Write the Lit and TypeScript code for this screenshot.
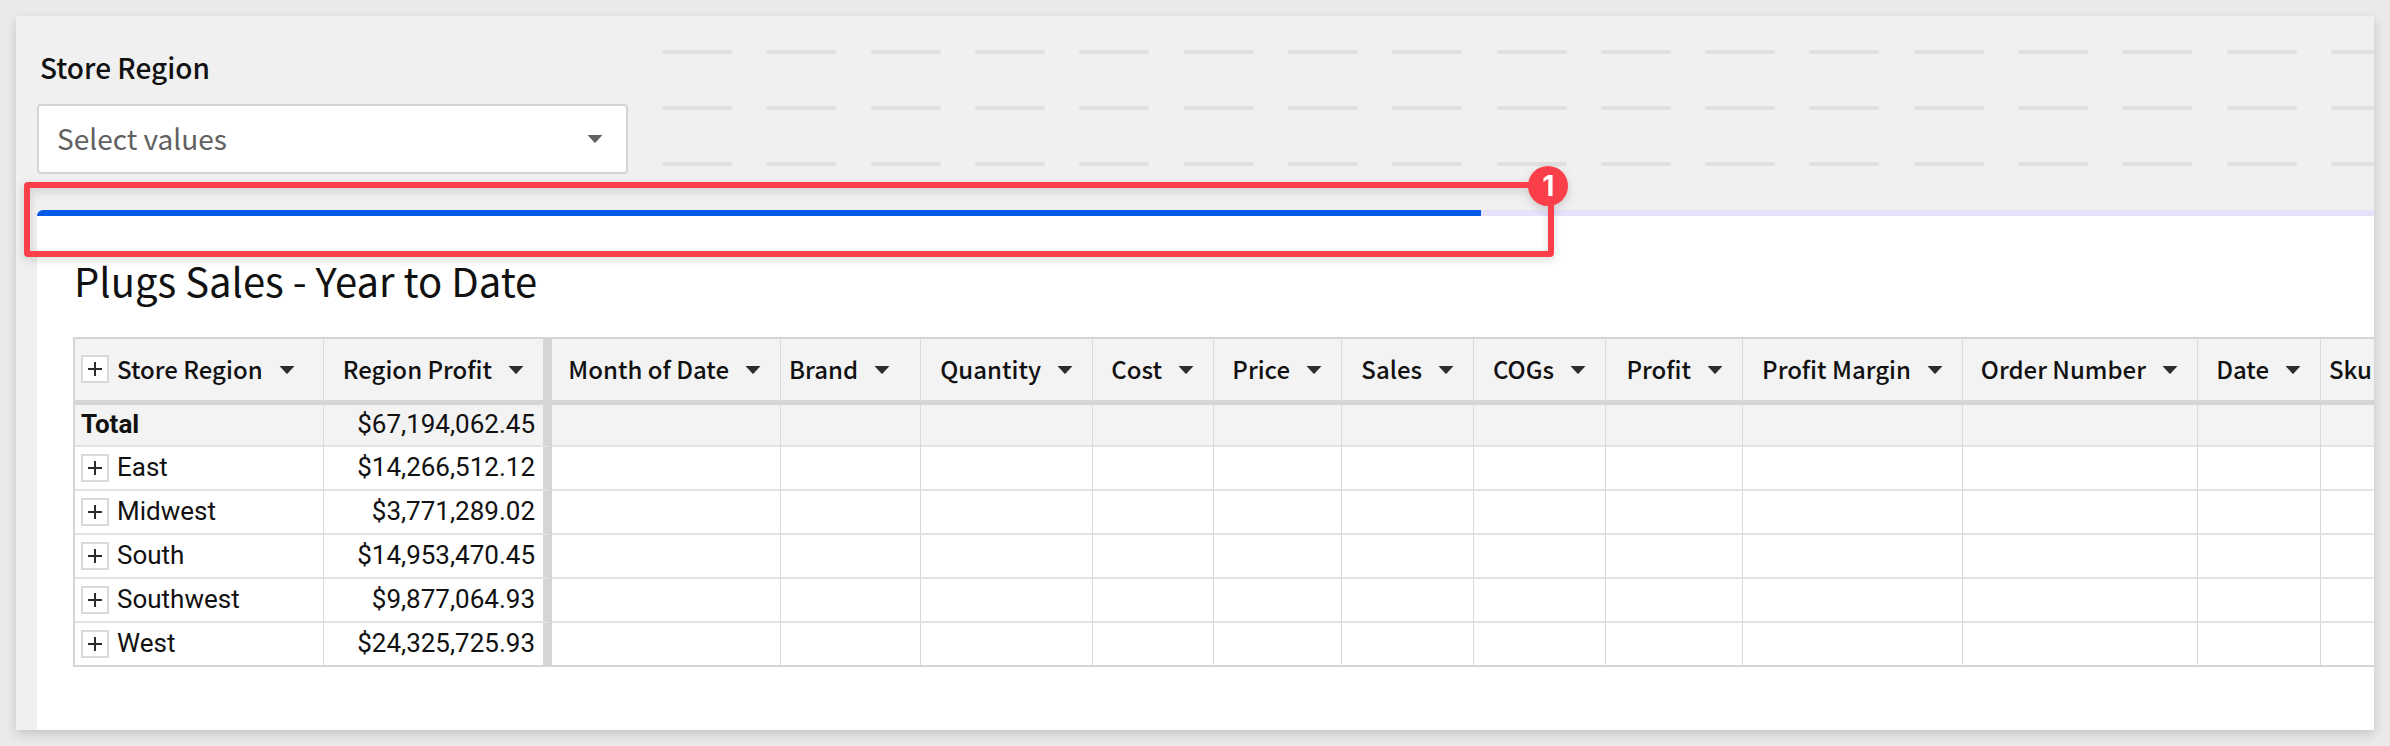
import { LitElement, html, css, nothing } from "lit";
import { customElement, property } from "lit/decorators.js";

interface Column {
  label: string;
  width: number;
  kind?: "group" | "frozen" | "text";
}

const COLUMNS: Column[] = [
  { label: "Store Region", width: 249, kind: "group" },
  { label: "Region Profit", width: 228, kind: "frozen" },
  { label: "Month of Date", width: 229 },
  { label: "Brand", width: 140, kind: "text" },
  { label: "Quantity", width: 172 },
  { label: "Cost", width: 121 },
  { label: "Price", width: 128 },
  { label: "Sales", width: 132 },
  { label: "COGs", width: 132 },
  { label: "Profit", width: 137 },
  { label: "Profit Margin", width: 220 },
  { label: "Order Number", width: 235 },
  { label: "Date", width: 123 },
  { label: "Sku", width: 140, kind: "text" },
];

const TABLE_WIDTH = COLUMNS.reduce((sum, c) => sum + c.width, 2);

const REGIONS: [string, string][] = [
  ["East", "$14,266,512.12"],
  ["Midwest", "$3,771,289.02"],
  ["South", "$14,953,470.45"],
  ["Southwest", "$9,877,064.93"],
  ["West", "$24,325,725.93"],
];

const caret = html`<svg width="16" height="8" viewBox="0 0 16 8" aria-hidden="true">
  <path d="M.5 0h15L8.6 7.6q-.6.6-1.2 0z" fill="currentColor" />
</svg>`;

@customElement("expand-button")
export class ExpandButton extends LitElement {
  @property() label = "";

  static styles = css`
    :host {
      display: block;
      flex: none;
    }
    .box {
      display: grid;
      place-items: center;
      width: 28px;
      height: 28px;
      padding: 0;
      box-sizing: border-box;
      border: 2px solid #d9d9d9;
      background: #fff;
      color: #2c2c2c;
    }
    svg {
      display: block;
    }
  `;

  render() {
    return html`<button class="box" type="button" aria-label=${this.label}>
      <svg width="14" height="14" viewBox="0 0 14 14" aria-hidden="true">
        <path d="M7 0v14M0 7h14" stroke="currentColor" stroke-width="2" />
      </svg>
    </button>`;
  }
}

@customElement("pivot-table")
export class PivotTable extends LitElement {
  static styles = css`
    :host {
      display: block;
      overflow: hidden;
    }
    table {
      table-layout: fixed;
      border-collapse: separate;
      border-spacing: 0;
      border-top: 2px solid #d5d5d5;
      border-left: 2px solid #d5d5d5;
      color: #111;
      font: 400 26px/32px Roboto, sans-serif;
    }
    th,
    td {
      box-sizing: border-box;
      height: 44px;
      padding: 0;
      border-right: 1px solid #d9d9d9;
      border-bottom: 2px solid #e3e3e3;
      text-align: left;
      white-space: nowrap;
    }
    thead th {
      height: 66px;
      border-bottom: 5px solid #d5d5d5;
      background: #f3f3f3;
      font: 500 24px/32px "Noto Sans CJK SC", "Noto Sans", sans-serif;
    }
    .total th,
    .total td {
      height: 42px;
      background: #f3f3f3;
    }
    .total th {
      font-weight: 700;
    }
    .last th,
    .last td {
      border-bottom-color: #d5d5d5;
    }
    thead .frozen,
    .frozen {
      border-right: 9px solid #d5d5d5;
    }
    .head {
      display: flex;
      align-items: center;
      justify-content: flex-end;
      gap: 16px;
      padding: 0 19px 2px;
    }
    .text .head {
      justify-content: flex-start;
      padding: 0 8px 2px;
    }
    .group .head {
      justify-content: flex-start;
      padding: 0 6px 2px;
    }
    .label {
      display: flex;
      align-items: center;
      gap: 8px;
    }
    .cell {
      display: flex;
      align-items: center;
      gap: 8px;
      padding: 0 6px;
    }
    .name {
      padding-bottom: 2px;
    }
    .amount {
      padding: 0 8px 2px;
      text-align: right;
    }
    .menu {
      display: grid;
      padding: 2px 0 0;
      border: 0;
      background: none;
      color: #2c2c2c;
    }
  `;

  render() {
    const blanks = COLUMNS.slice(2).map(() => html`<td></td>`);
    return html`<table style="width:${TABLE_WIDTH}px">
      <colgroup>
        ${COLUMNS.map((c) => html`<col style="width:${c.width}px" />`)}
      </colgroup>
      <thead>
        <tr>
          ${COLUMNS.map(
            (c) => html`<th class=${c.kind ?? "number"} scope="col">
              <div class="head">
                <span class="label">
                  ${c.kind === "group"
                    ? html`<expand-button label="Expand all"></expand-button>`
                    : nothing}
                  ${c.label}
                </span>
                <button class="menu" type="button" aria-label="${c.label} menu">${caret}</button>
              </div>
            </th>`
          )}
        </tr>
      </thead>
      <tbody>
        <tr class="total">
          <th scope="row"><div class="cell"><span class="name">Total</span></div></th>
          <td class="frozen"><div class="amount">$67,194,062.45</div></td>
          ${blanks}
        </tr>
        ${REGIONS.map(
          ([name, amount], i) => html`<tr class=${i === REGIONS.length - 1 ? "last" : "row"}>
            <td>
              <div class="cell">
                <expand-button label="Expand ${name}"></expand-button>
                <span class="name">${name}</span>
              </div>
            </td>
            <td class="frozen"><div class="amount">${amount}</div></td>
            ${blanks}
          </tr>`
        )}
      </tbody>
    </table>`;
  }
}

@customElement("app-root")
export class AppRoot extends LitElement {
  @property({ type: Number }) progress = 61.8;

  static styles = css`
    :host {
      display: block;
      box-sizing: border-box;
      min-height: 100vh;
      padding: 16px;
      background: #eaeaea;
      color: #111;
      font-family: "Noto Sans CJK SC", "Noto Sans", sans-serif;
    }
    .card {
      padding-left: 21px;
      background: #f0f0f0;
      box-shadow: 0 4px 10px rgba(0, 0, 0, 0.16);
    }
    .top {
      display: flex;
      gap: 34px;
      padding: 34px 0 36px;
      overflow: hidden;
    }
    .filter {
      flex: none;
      display: flex;
      flex-direction: column;
      gap: 20px;
      width: 591px;
    }
    .filter label {
      padding-left: 3px;
      font-size: 28px;
      font-weight: 500;
      line-height: 34px;
    }
    .field {
      display: grid;
      align-items: center;
    }
    .field > * {
      grid-area: 1 / 1;
    }
    select {
      appearance: none;
      width: 100%;
      height: 70px;
      padding: 0 48px 2px 18px;
      border: 2px solid #d5d5d5;
      border-radius: 4px;
      background: #fff;
      color: #616161;
      font: 400 28px/40px "Noto Sans CJK SC", "Noto Sans", sans-serif;
    }
    .arrow {
      justify-self: end;
      display: grid;
      margin-right: 25px;
      color: #616161;
      pointer-events: none;
    }
    .dashes {
      flex: 1;
      display: grid;
      grid-template-columns: repeat(17, 70px);
      align-content: start;
      justify-content: space-between;
      row-gap: 52px;
      margin-right: -27px;
    }
    .dash {
      height: 4px;
      border-radius: 2px;
      background: #e0e0e0;
    }
    .panel {
      position: relative;
      padding: 0 0 63px 36px;
      border-top-left-radius: 8px;
      background: #fff;
    }
    .track {
      height: 6px;
      margin-left: -36px;
      overflow: hidden;
      border-top-left-radius: 8px;
      background: #e5e2fa;
    }
    .fill {
      height: 100%;
      background: #0759e8;
    }
    h1 {
      margin: 0;
      padding: 36px 0 29px 1px;
      font-size: 40px;
      font-weight: 400;
      line-height: 56px;
    }
    .callout {
      position: absolute;
      top: -28px;
      left: -13px;
      box-sizing: border-box;
      width: calc(61.8% + 86px);
      height: 75px;
      border: 6px solid #fa3e4a;
      border-radius: 4px;
      filter: drop-shadow(0 3px 4px rgba(0, 0, 0, 0.16));
      pointer-events: none;
    }
    .badge {
      position: absolute;
      top: -22px;
      right: -20px;
      width: 40px;
      border-radius: 50%;
      background: #fa3e4a;
      color: #fff;
      font: 700 28px/40px Inter, sans-serif;
      text-align: center;
    }
  `;

  render() {
    return html`<main class="card">
      <div class="top">
        <div class="filter">
          <label for="region">Store Region</label>
          <div class="field">
            <select id="region">
              <option value="">Select values</option>
              ${REGIONS.map(([name]) => html`<option>${name}</option>`)}
            </select>
            <span class="arrow">${caret}</span>
          </div>
        </div>
        <div class="dashes" aria-hidden="true">
          ${Array.from({ length: 51 }, () => html`<span class="dash"></span>`)}
        </div>
      </div>
      <section class="panel">
        <div
          class="track"
          role="progressbar"
          aria-label="Loading"
          aria-valuenow=${this.progress}
        >
          <div class="fill" style="width:${this.progress}%"></div>
        </div>
        <h1>Plugs Sales - Year to Date</h1>
        <pivot-table></pivot-table>
        <div class="callout"><span class="badge">1</span></div>
      </section>
    </main>`;
  }
}
